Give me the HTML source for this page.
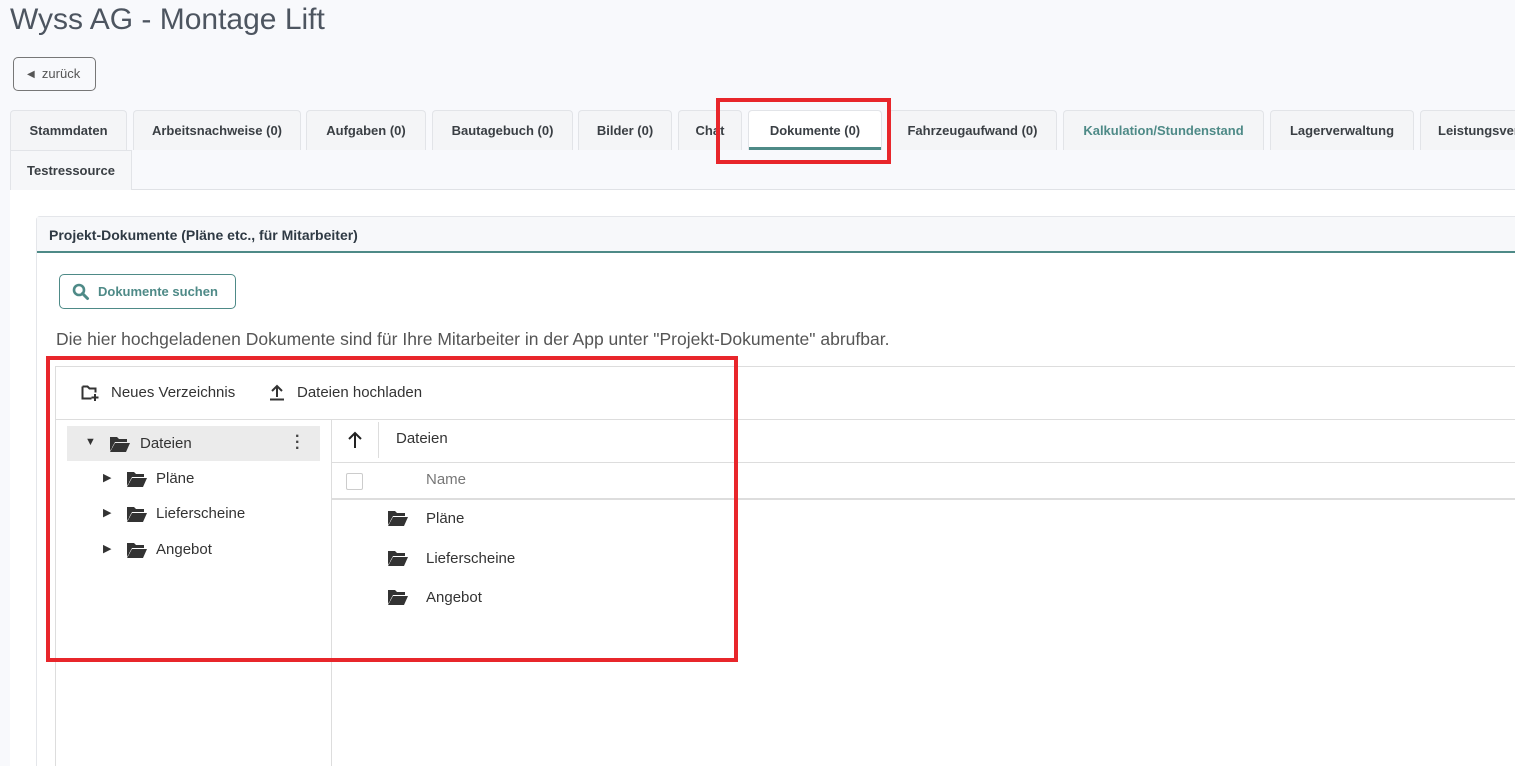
<!DOCTYPE html>
<html><head><meta charset="utf-8"><style>
*{box-sizing:border-box;margin:0;padding:0}
html{width:1515px;height:766px;overflow:hidden}
body{width:1515px;height:766px;overflow:hidden;background:#f8f9fc;font-family:"Liberation Sans",sans-serif;color:#333;position:relative}
.a{position:absolute}
.tab{position:absolute;top:110px;height:40px;background:#f4f5f7;border:1px solid #e2e4e8;border-bottom:none;border-radius:4px 4px 0 0;font-size:13px;font-weight:bold;color:#3a3f44;text-align:center;line-height:39px;white-space:nowrap;overflow:hidden}
.folder{position:absolute;width:20px;height:16px}
.t{position:absolute;font-size:15px;color:#333}
</style></head><body>
<div class="a" style="left:10px;top:3px;font-size:30px;color:#4d5560">Wyss AG - Montage Lift</div>
<div class="a" style="left:13px;top:57px;width:83px;height:34px;border:1px solid #777;border-radius:5px;font-size:13px;color:#555;line-height:32px;padding-left:13px"><span style="font-size:10px;position:relative;top:-1px">◀</span>&nbsp; zurück</div>

<div class="a" style="left:10px;top:189px;width:1505px;height:577px;background:#fff;border-top:1px solid #e0e2e6"></div>
<div class="tab" style="left:10px;width:117px">Stammdaten</div>
<div class="tab" style="left:133px;width:168px">Arbeitsnachweise (0)</div>
<div class="tab" style="left:306px;width:120px">Aufgaben (0)</div>
<div class="tab" style="left:432px;width:141px">Bautagebuch (0)</div>
<div class="tab" style="left:578px;width:94px">Bilder (0)</div>
<div class="tab" style="left:678px;width:64px">Chat</div>
<div class="tab" style="left:748px;width:134px;background:#fff">Dokumente (0)<div class="a" style="left:0;right:0;bottom:0;height:3px;background:#4e8a87"></div></div>
<div class="tab" style="left:888px;width:169px">Fahrzeugaufwand (0)</div>
<div class="tab" style="left:1063px;width:201px;color:#4e8a87">Kalkulation/Stundenstand</div>
<div class="tab" style="left:1270px;width:144px">Lagerverwaltung</div>
<div class="tab" style="left:1420px;width:110px;text-align:left;padding-left:17px">Leistungsverz</div>
<div class="tab" style="left:10px;top:150px;width:122px;height:40px;background:#f6f7f9;border-radius:0">Testressource</div>

<div class="a" style="left:36px;top:216px;width:1490px;height:560px;background:#fff;border:1px solid #e4e6ea;border-radius:4px"></div>
<div class="a" style="left:37px;top:217px;width:1480px;height:36px;background:#f7f8fa;border-bottom:2px solid #4e8a87;font-size:14px;font-weight:bold;color:#2f3a44;line-height:36px;padding-left:12px">Projekt-Dokumente (Pläne etc., für Mitarbeiter)</div>
<div class="a" style="left:59px;top:274px;width:177px;height:35px;border:1px solid #4e8a87;border-radius:5px;font-size:13px;font-weight:bold;color:#4e8a87;line-height:33px;padding-left:38px">Dokumente suchen
<svg class="a" style="left:12px;top:8px" width="18" height="18" viewBox="0 0 18 18"><circle cx="7" cy="7" r="5" fill="none" stroke="#4e8a87" stroke-width="2.6"/><path d="M10.5 10.5L15.5 15.5" stroke="#4e8a87" stroke-width="3" stroke-linecap="round"/></svg></div>
<div class="a" style="left:56px;top:329px;font-size:17.5px;color:#555">Die hier hochgeladenen Dokumente sind für Ihre Mitarbeiter in der App unter "Projekt-Dokumente" abrufbar.</div>

<div class="a" style="left:55px;top:366px;width:1470px;height:410px;border:1px solid #ddd;background:#fff"></div>
<div class="a" style="left:56px;top:419px;width:1460px;height:1px;background:#ddd"></div>
<div class="a" style="left:331px;top:420px;width:1px;height:346px;background:#ddd"></div>
<svg class="a" style="left:81px;top:384px" width="19" height="18" viewBox="0 0 19 18"><path d="M1.5 2.5h5l2 2h6v4M1.5 2.5v12h9" fill="none" stroke="#333" stroke-width="2"/><path d="M14 10v7M10.5 13.5h7" stroke="#333" stroke-width="2"/></svg>
<div class="t" style="left:111px;top:384px">Neues Verzeichnis</div>
<svg class="a" style="left:269px;top:384px" width="16" height="17" viewBox="0 0 16 17"><path d="M8 13V2M3 7l5-5 5 5" fill="none" stroke="#333" stroke-width="2"/><path d="M1 15.5h14" stroke="#333" stroke-width="2"/></svg>
<div class="t" style="left:297px;top:384px">Dateien hochladen</div>

<div class="a" style="left:67px;top:426px;width:253px;height:35px;background:#ebebeb"></div>
<div class="a" style="left:85px;top:436px;font-size:11px">▼</div>
<div class="t" style="left:140px;top:435px">Dateien</div>
<div class="a" style="left:295px;top:434px;font-size:16px;font-weight:bold;line-height:6px;color:#444">·<br>·<br>·</div>
<div class="a" style="left:103px;top:471px;font-size:11px">▶</div>
<div class="t" style="left:156px;top:470px">Pläne</div>
<div class="a" style="left:103px;top:506px;font-size:11px">▶</div>
<div class="t" style="left:156px;top:505px">Lieferscheine</div>
<div class="a" style="left:103px;top:542px;font-size:11px">▶</div>
<div class="t" style="left:156px;top:541px">Angebot</div>

<div class="a" style="left:332px;top:462px;width:1190px;height:1px;background:#ddd"></div>
<div class="a" style="left:378px;top:422px;width:1px;height:36px;background:#ddd"></div>
<svg class="a" style="left:347px;top:431px" width="16" height="18" viewBox="0 0 16 18"><path d="M8 17V3M2 8l6-6 6 6" fill="none" stroke="#222" stroke-width="2"/></svg>
<div class="t" style="left:396px;top:430px">Dateien</div>
<div class="a" style="left:346px;top:473px;width:17px;height:17px;border:1px solid #ccc;border-radius:2px"></div>
<div class="t" style="left:426px;top:471px;color:#777">Name</div>
<div class="a" style="left:332px;top:498px;width:1190px;height:2px;background:#ddd"></div>
<div class="t" style="left:426px;top:510px">Pläne</div>
<div class="t" style="left:426px;top:550px">Lieferscheine</div>
<div class="t" style="left:426px;top:589px">Angebot</div>

<svg width="0" height="0" style="position:absolute"><defs><symbol id="f" viewBox="0 0 20 16"><path d="M0 1h7l2 2h8v3H5L0 15z M5 7h15l-4 9H0z" fill="#333"/><path d="M1.5 2.5v10" stroke="#333"/></symbol></defs></svg>
<svg class="folder" style="left:110px;top:436px"><use href="#f"/></svg>
<svg class="folder" style="left:127px;top:471px"><use href="#f"/></svg>
<svg class="folder" style="left:127px;top:506px"><use href="#f"/></svg>
<svg class="folder" style="left:127px;top:542px"><use href="#f"/></svg>
<svg class="folder" style="left:388px;top:510px"><use href="#f"/></svg>
<svg class="folder" style="left:388px;top:550px"><use href="#f"/></svg>
<svg class="folder" style="left:388px;top:589px"><use href="#f"/></svg>

<div class="a" style="left:716px;top:98px;width:175px;height:66px;border:4px solid #e8262b"></div>
<div class="a" style="left:46px;top:356px;width:692px;height:306px;border:4px solid #e8262b"></div>
</body></html>
